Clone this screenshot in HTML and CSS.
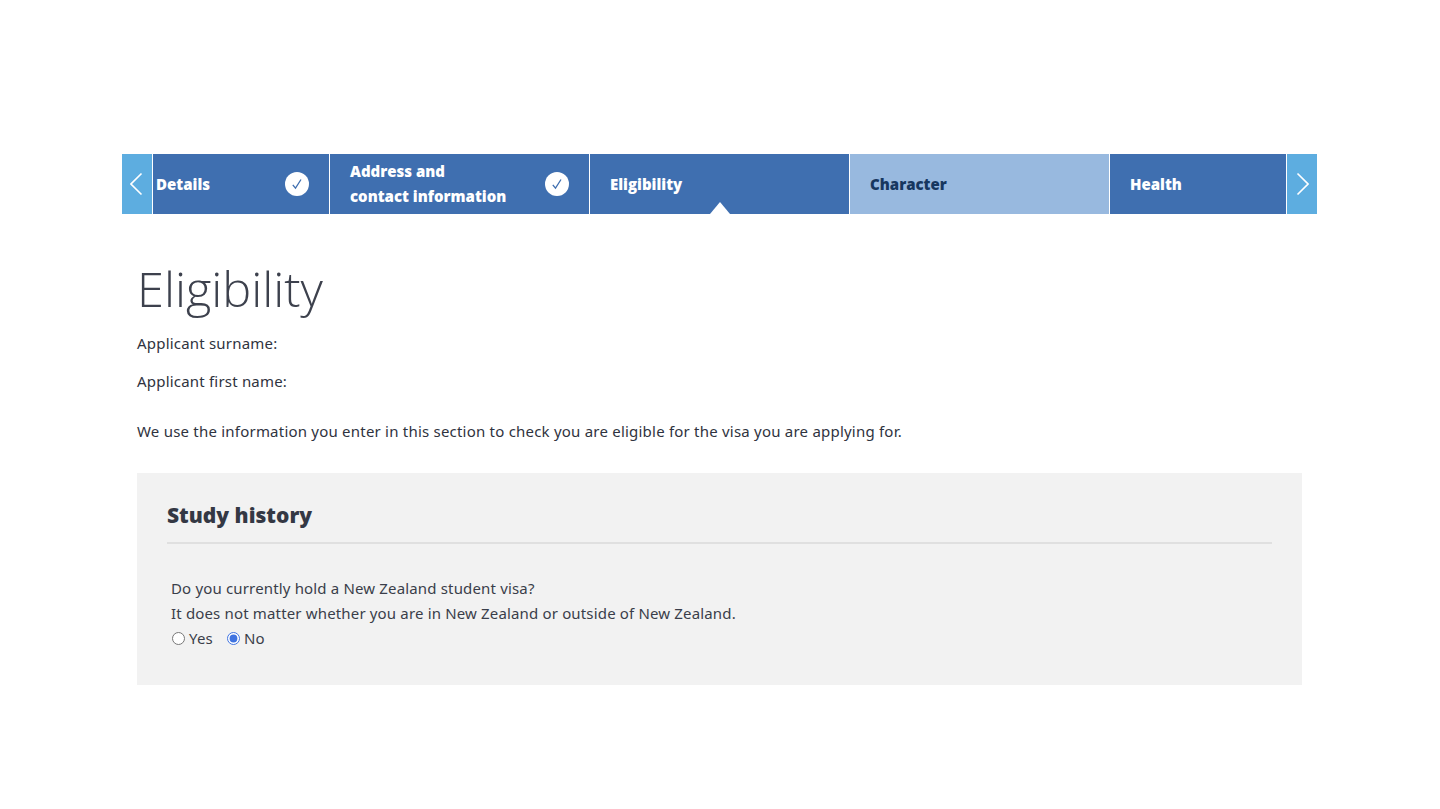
FILE: index.html
```html
<!DOCTYPE html>
<html lang="en">
<head>
<meta charset="utf-8">
<title>Eligibility</title>
<link rel="stylesheet" href="styles.css">
</head>
<body>
<main class="page">
  <nav class="stepper">
    <a class="arrow arrow-prev"><svg width="14" height="24" viewBox="0 0 14 24"><path d="M11.500 1.500 1 12l10.500 10.500" fill="none" stroke="#fff" stroke-width="1.600"/></svg></a>
    <a class="step step-first"><span class="step-label">Details</span><span class="tick"><svg width="12" height="12" viewBox="0 0 12 12"><path d="M1.800 6.800 4.500 10.200 10 1.500" fill="none" stroke="#3f6fb0" stroke-width="1.300"/></svg></span></a>
    <a class="step step-wide"><span class="step-label">Address and<br>contact information</span><span class="tick"><svg width="12" height="12" viewBox="0 0 12 12"><path d="M1.800 6.800 4.500 10.200 10 1.500" fill="none" stroke="#3f6fb0" stroke-width="1.300"/></svg></span></a>
    <a class="step step-wide step-current"><span class="step-label">Eligibility</span></a>
    <a class="step step-wide step-light"><span class="step-label">Character</span></a>
    <a class="step step-last"><span class="step-label">Health</span></a>
    <a class="arrow arrow-next"><svg width="14" height="24" viewBox="0 0 14 24"><path d="M2.500 1.500 13 12 2.500 22.500" fill="none" stroke="#fff" stroke-width="1.600"/></svg></a>
  </nav>
  <section class="content">
    <h1 class="title">Eligibility</h1>
    <p class="meta">Applicant surname:</p>
    <p class="meta">Applicant first name:</p>
    <p class="intro">We use the information you enter in this section to check you are eligible for the visa you are applying for.</p>
    <div class="panel">
      <h2 class="panel-title">Study history</h2>
      <div class="question">
        <div>Do you currently hold a New Zealand student visa?</div>
        <div>It does not matter whether you are in New Zealand or outside of New Zealand.</div>
        <div class="options">
          <label class="option"><input type="radio" name="visa">Yes</label>
          <label class="option"><input type="radio" name="visa" checked>No</label>
        </div>
      </div>
    </div>
  </section>
</main>
</body>
</html>
```

FILE: styles.css
```css
* { box-sizing: border-box; }
html, body { margin: 0; padding: 0; background: #fff; }
body { font-family: "Noto Sans", "Open Sans", sans-serif; color: #2f3340; height: 809px; overflow: hidden; }
.page { width: 1195px; margin-left: 122px; padding-top: 154px; }
.stepper { display: flex; height: 60px; gap: 1px; background: #fff; }
.arrow { width: 30px; background: #5dade0; display: flex; align-items: center; justify-content: center; flex: none; }
.step { position: relative; display: flex; align-items: center; justify-content: space-between; background: #3f6fb0; color: #fff; font-family: "Open Sans", sans-serif; font-weight: 800; font-size: 15px; line-height: 25px; padding: 0 20px; flex: none; }
.step-first { width: 176px; padding-left: 3px; }
.step-wide { width: 259px; }
.step-last { width: 176px; }
.step-light { background: #98b9df; color: #17375f; }
.step-current::after { content: ""; position: absolute; left: 120px; bottom: 0; border-left: 10px solid transparent; border-right: 10px solid transparent; border-bottom: 12px solid #fff; }
.tick { width: 24px; height: 24px; border-radius: 50%; background: #fff; display: flex; align-items: center; justify-content: center; flex: none; }
.content { padding: 0 15px; }
.title { margin: 44px 0 0; font-family: "Open Sans", sans-serif; font-weight: 300; font-size: 48.700px; line-height: 60px; color: #3d414d; }
.meta { margin: 0; font-size: 15px; letter-spacing: 0.200px; line-height: 22px; padding-bottom: 16px; }
.meta:first-of-type { margin-top: 14px; }
.intro { margin: 12px 0 0; font-size: 15px; letter-spacing: 0.215px; line-height: 22px; }
.panel { margin-top: 31px; height: 212px; background: #f2f2f2; padding: 24px 30px 0; }
.panel-title { margin: 0; font-family: "Open Sans", sans-serif; font-weight: 800; font-size: 21px; line-height: 36px; height: 47px; border-bottom: 2px solid #e0e0e0; color: #343844; }
.question { margin-top: 32px; padding-left: 4px; font-size: 15px; letter-spacing: 0.160px; line-height: 25px; color: #3a3e4a; }
.options { display: flex; gap: 13px; }
.option { display: flex; align-items: center; }
.option input { margin: 0 4px 0 1px; width: 13px; height: 13px; accent-color: #3f73e0; }
```
